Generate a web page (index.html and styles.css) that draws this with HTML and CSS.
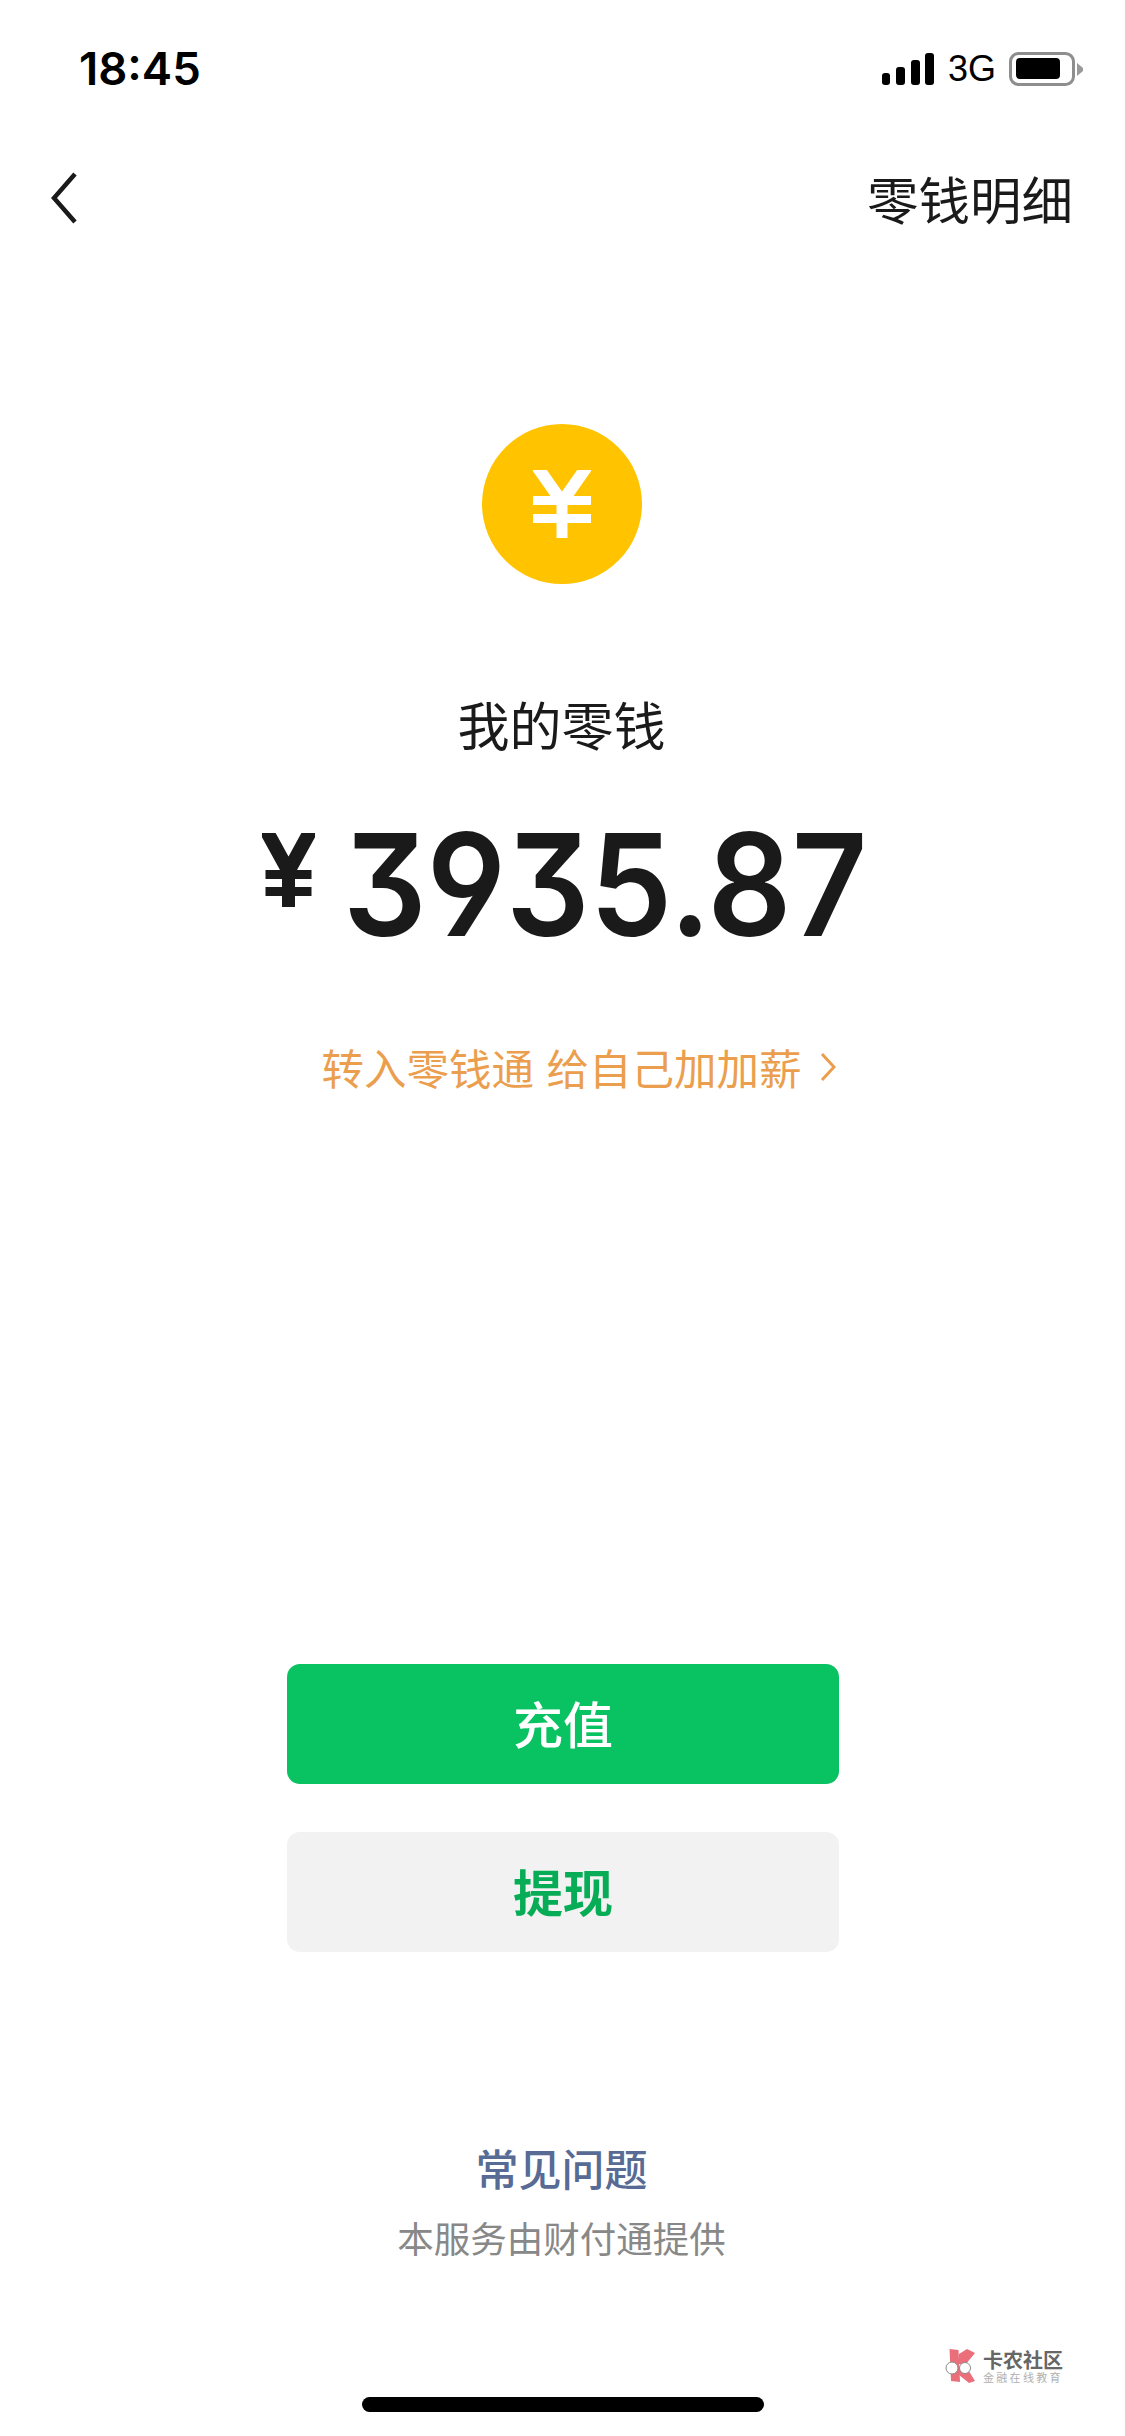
FILE: index.html
```html
<!DOCTYPE html>
<html lang="zh-CN">
<head>
    <meta charset="UTF-8">
    <meta name="viewport" content="width=device-width, initial-scale=1.0">
    <title>我的零钱</title>
    <link rel="stylesheet" href="styles.css">
</head>
<body>
    <div class="page">
        <div class="status-bar">
            <span class="time">18:45</span>
            <div class="status-icons">
                <svg class="signal" width="52" height="32" viewBox="0 0 52 32">
                    <rect x="0" y="20" width="8" height="12" rx="3" fill="#000"/>
                    <rect x="14" y="14" width="9" height="18" rx="3" fill="#000"/>
                    <rect x="29" y="7" width="9" height="25" rx="3" fill="#000"/>
                    <rect x="43" y="0" width="9" height="32" rx="3" fill="#000"/>
                </svg>
                <span class="network">3G</span>
                <svg class="battery" width="74" height="34" viewBox="0 0 74 34">
                    <rect x="1.5" y="1.5" width="63" height="31" rx="8" fill="none" stroke="#8e8e8e" stroke-width="3"/>
                    <rect x="7" y="6" width="44" height="21" rx="4" fill="#000"/>
                    <path d="M68 11l6 5v3l-6 5z" fill="#999"/>
                </svg>
            </div>
        </div>

        <div class="nav-bar">
            <svg class="back" width="30" height="54" viewBox="0 0 30 54">
                <path d="M26 3 5 27l21 24" fill="none" stroke="#1a1a1a" stroke-width="4.5"/>
            </svg>
            <span class="nav-link">零钱明细</span>
        </div>

        <div class="balance">
            <div class="coin">
                <svg width="58" height="68" viewBox="0 0 58 68">
                    <path d="M3 -5 29 32 55 -5" fill="none" stroke="#fff" stroke-width="12"/>
                    <rect x="0" y="26" width="58" height="9" fill="#fff"/>
                    <rect x="0" y="44" width="58" height="9" fill="#fff"/>
                    <rect x="23.5" y="30" width="11" height="38" fill="#fff"/>
                </svg>
            </div>
            <div class="balance-label">我的零钱</div>
            <div class="amount">
                <svg class="amount-yen" width="53" height="74" viewBox="0 0 53 74">
                    <path d="M4 -3 26.5 38 49 -3" fill="none" stroke="#1a1a1a" stroke-width="14"/>
                    <rect x="3.5" y="37" width="46" height="9" fill="#1a1a1a"/>
                    <rect x="3.5" y="54" width="46" height="9" fill="#1a1a1a"/>
                    <rect x="20" y="34" width="13" height="40" fill="#1a1a1a"/>
                </svg>
                <span class="amount-value">3935.87</span>
            </div>
            <div class="promo">
                <span>转入零钱通 给自己加加薪</span>
                <svg width="16" height="30" viewBox="0 0 16 30">
                    <path d="M2 2l12 13L2 28" fill="none" stroke="#eb9f4e" stroke-width="3"/>
                </svg>
            </div>
        </div>

        <div class="actions">
            <div class="btn btn-primary">充值</div>
            <div class="btn btn-default">提现</div>
        </div>

        <div class="footer">
            <div class="faq">常见问题</div>
            <div class="provider">本服务由财付通提供</div>
        </div>

        <div class="home-bar"></div>

        <div class="watermark">
            <svg width="34" height="34" viewBox="0 0 34 34">
                <path d="M4.5 0 13.5 1 15 33 6 32z" fill="#ea6f7a"/>
                <path d="M14 5 22 0 30 4 21 15 14 15z" fill="#ea6f7a"/>
                <path d="M14 19 22 19 30 32 24 34 14 26z" fill="#ea6f7a"/>
                <circle cx="7" cy="19" r="6" fill="#fff" stroke="#8a8a8a" stroke-width="1"/>
                <circle cx="20" cy="19" r="5.5" fill="#fff" stroke="#8a8a8a" stroke-width="1"/>
            </svg>
            <div class="watermark-text">
                <div class="watermark-name">卡农社区</div>
                <div class="watermark-sub">金融在线教育</div>
            </div>
        </div>
    </div>
</body>
</html>
```

FILE: styles.css
```css
* {
    box-sizing: border-box;
}
body {
    margin: 0;
    background-color: #fff;
    font-family: "Noto Sans CJK SC", "Noto Sans", sans-serif;
    color: #1a1a1a;
}
.page {
    position: relative;
    width: 1125px;
    height: 2436px;
    overflow: hidden;
}
.status-bar {
    display: flex;
    justify-content: space-between;
    align-items: center;
    height: 34px;
    margin-top: 52px;
    padding: 0 42px 0 79px;
}
.time {
    font-family: Inter, sans-serif;
    font-size: 45.5px;
    font-weight: 600;
    color: #000;
    line-height: 34px;
}
.status-icons {
    display: flex;
    align-items: center;
}
.network {
    font-family: "Liberation Sans", sans-serif;
    font-size: 36px;
    color: #000;
    line-height: 34px;
    margin: 0 13px 0 14px;
}
.nav-bar {
    display: flex;
    justify-content: space-between;
    align-items: center;
    height: 54px;
    margin-top: 85px;
    padding: 0 52px 0 49px;
}
.nav-link {
    font-size: 51.5px;
    line-height: 54px;
}
.balance {
    display: flex;
    flex-direction: column;
    align-items: center;
    margin-top: 199px;
    padding-right: 2px;
}
.coin {
    display: flex;
    justify-content: center;
    align-items: center;
    width: 160px;
    height: 160px;
    border-radius: 50%;
    background-color: #ffc300;
}
.balance-label {
    margin-top: 104px;
    font-size: 52px;
    line-height: 72px;
}
.amount {
    display: flex;
    align-items: flex-start;
    margin-top: 69px;
    height: 110px;
}
.amount-yen {
    margin: 4px 28px 0 0;
}
.amount-value {
    margin-right: -48px;
    font-family: Inter, sans-serif;
    font-size: 142px;
    font-weight: 600;
    line-height: 110px;
    font-feature-settings: "cv09", "cv04";
    transform: scaleX(0.925);
    transform-origin: left center;
}
.promo {
    display: flex;
    align-items: center;
    gap: 18px;
    margin-top: 100px;
    padding-left: 34px;
    font-size: 42.5px;
    word-spacing: 3px;
    line-height: 56px;
    color: #eb9f4e;
}
.actions {
    display: flex;
    flex-direction: column;
    align-items: center;
    gap: 48px;
    margin-top: 569px;
    padding-left: 1px;
}
.btn {
    display: flex;
    justify-content: center;
    align-items: center;
    width: 552px;
    height: 120px;
    padding-bottom: 4px;
    border-radius: 13px;
    font-size: 50px;
    font-weight: 500;
}
.btn-primary {
    background-color: #09c261;
    color: #fff;
}
.btn-default {
    background-color: #f2f2f2;
    color: #07ad56;
    font-weight: 700;
}
.footer {
    display: flex;
    flex-direction: column;
    align-items: center;
    margin-top: 186px;
    padding-right: 2px;
}
.faq {
    font-size: 43px;
    font-weight: 500;
    line-height: 58px;
    color: #576b95;
}
.provider {
    margin-top: 15px;
    font-size: 36.5px;
    line-height: 54px;
    color: #888;
}
.home-bar {
    position: absolute;
    left: 362px;
    bottom: 24px;
    width: 402px;
    height: 15px;
    border-radius: 8px;
    background-color: #000;
}
.watermark {
    position: absolute;
    left: 945px;
    top: 2349px;
    display: flex;
    gap: 4px;
}
.watermark-name {
    font-size: 20px;
    font-weight: 700;
    line-height: 21px;
    color: #666;
}
.watermark-sub {
    margin-top: 1px;
    font-size: 11px;
    line-height: 12px;
    letter-spacing: 2.3px;
    color: #b0b0b0;
}
```
